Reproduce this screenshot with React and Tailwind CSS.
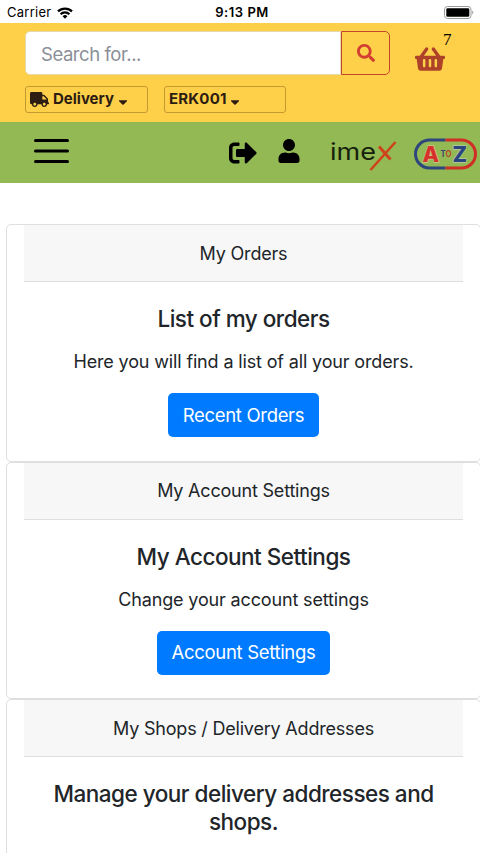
import { FaTruck, FaCaretDown, FaSearch, FaShoppingBasket, FaSignOutAlt, FaUser } from 'react-icons/fa';

const cards = [
    { header: 'My Orders', title: 'List of my orders', text: 'Here you will find a list of all your orders.', button: 'Recent Orders' },
    { header: 'My Account Settings', title: 'My Account Settings', text: 'Change your account settings', button: 'Account Settings' },
    { header: 'My Shops / Delivery Addresses', title: 'Manage your delivery addresses and shops.' },
];

function StatusBar() {
    return (
        <div className="h-[23px] shrink-0 bg-white grid grid-cols-3 items-center pl-[8px] pr-[6px] pt-[2px] text-[13px] text-black">
            <div className="flex items-center gap-[6px]">
                <span className="tracking-[0.25px] -ml-px">Carrier</span>
                <svg width="16" height="12" viewBox="0 0 16 12" fill="none" stroke="#000" strokeWidth="2.2">
                    <path d="M1 4.4a10 10 0 0 1 14 0" />
                    <path d="M3.6 7.2a6.2 6.2 0 0 1 8.8 0" />
                    <path d="M8 11.8 5.6 9.3a3.4 3.4 0 0 1 4.8 0Z" fill="#000" stroke="none" />
                </svg>
            </div>
            <span className="text-center font-semibold tracking-[0.55px] pl-[2px] whitespace-nowrap">9:13 PM</span>
            <svg className="justify-self-end mb-px" width="30" height="13" viewBox="0 0 30 13">
                <rect x="0.5" y="0.5" width="26.5" height="12" rx="3" fill="none" stroke="#9a9a9a" />
                <rect x="2.3" y="2.2" width="23" height="8.6" rx="1.4" fill="#000" />
                <path d="M28.3 4.6v3.8c1.4-.6 1.4-3.2 0-3.8Z" fill="#8c8c8c" />
            </svg>
        </div>
    );
}

function SearchHeader() {
    return (
        <div className="h-[99px] shrink-0 bg-[#fed049] pl-[25px] pt-2">
            <div className="flex">
                <div className="flex w-[365px] h-[44px]">
                    <input className="w-[316px] bg-white border border-[#e5d9ab] rounded-l-[5px] px-[15px] pt-[3px] text-[18.5px] tracking-[-0.45px] placeholder:text-[#8a8f98]" placeholder="Search for..." />
                    <button className="flex-1 border border-[#c4452e] rounded-r-[5px] flex items-center justify-center text-[#d23f31]">
                        <FaSearch size={18} />
                    </button>
                </div>
                <div className="relative ml-[25px] pt-[13px]">
                    <FaShoppingBasket size={30} className="text-[#ae4229]" />
                    <span className="absolute left-[28px] -top-px text-[17px] leading-5 text-black font-[Liberation_Serif,serif]">7</span>
                </div>
            </div>
            <div className="flex gap-4 mt-[11px] text-[15px] font-bold text-[#2c1c12]">
                <button className="w-[123px] h-[27px] border border-[#c49a30] rounded-[3px] flex items-center pl-1">
                    <FaTruck size={19} />
                    <span className="ml-1 tracking-normal">Delivery</span>
                    <FaCaretDown size={14} className="ml-[2px] mt-[5px]" />
                </button>
                <button className="w-[122px] h-[27px] border border-[#c49a30] rounded-[3px] flex items-center pl-1">
                    <span className="tracking-[0.2px]">ERK001</span>
                    <FaCaretDown size={14} className="ml-px mt-[5px]" />
                </button>
            </div>
        </div>
    );
}

function ImexLogo() {
    return (
        <svg className="ml-[29px] overflow-visible" width="68" height="34" viewBox="0 0 68 34">
            <text x="0" y="23.5" fontFamily="Inter" fontWeight="400" fontSize="23" fill="#16200c" textLength="46" lengthAdjust="spacingAndGlyphs">ime</text>
            <path d="M49 10.500 60.500 23.500" stroke="#d0421d" strokeWidth="3" />
            <path d="M65.500 6 40.500 34" stroke="#d0421d" strokeWidth="2.600" />
        </svg>
    );
}

function AtoZLogo() {
    return (
        <svg className="ml-[16px] mt-[3px] shrink-0" width="63" height="32" viewBox="0 0 63 32">
            <path d="M31.500 2H15.500a14 14 0 0 0 0 28H31.500" fill="none" stroke="#2f467c" strokeWidth="3" />
            <path d="M31.500 2H47.500a14 14 0 0 1 0 28H31.500" fill="none" stroke="#cf2f25" strokeWidth="3" />
            <text x="8.500" y="23.500" fontFamily="Inter" fontWeight="800" fontSize="21.500" fill="#d6322b" stroke="#d5c28c" strokeWidth="1.400" paintOrder="stroke">A</text>
            <text x="26.500" y="18.800" fontFamily="Inter" fontWeight="700" fontSize="8.500" fill="#3b4569" textLength="11" lengthAdjust="spacingAndGlyphs">T<tspan fill="#b94a2c">O</tspan></text>
            <text x="38.500" y="23.500" fontFamily="Inter" fontWeight="800" fontSize="21.500" fill="#29467f" stroke="#b9c7a0" strokeWidth="1.400" paintOrder="stroke">Z</text>
        </svg>
    );
}

function NavBar() {
    return (
        <div className="h-[61px] shrink-0 bg-[#92b954] flex items-center pl-[34px] text-black">
            <svg className="-mt-[3px]" width="35" height="26" viewBox="0 0 35 26" stroke="#000" strokeWidth="3" strokeLinecap="round">
                <path d="M1.500 2.500h32M1.500 13h32M1.500 23.500h32" />
            </svg>
            <FaSignOutAlt size={28} className="ml-[160px]" />
            <FaUser size={24} className="ml-[20px] -mt-[3px]" />
            <ImexLogo />
            <AtoZLogo />
        </div>
    );
}

function Card({ header, title, text, button }) {
    return (
        <div className="h-[237.6px] shrink-0 border border-[#dfdfdf] rounded-[5px] px-[17px] text-center text-[#212529]">
            <div className="h-[57px] bg-[#f7f7f7] border-b border-[#dfdfdf] flex items-center justify-center text-[18px] tracking-[-0.2px]">{header}</div>
            <div className="px-[23px] pt-[23px]">
                <h5 className="text-[22.5px] leading-[28px] font-medium tracking-[-0.5px]">{title}</h5>
                {text && <p className="mt-[15px] text-[18px] leading-[28px] tracking-[-0.15px]">{text}</p>}
                {button && <button className="mt-[17px] h-[44px] px-[15px] pt-px rounded-[5px] bg-[#007bff] text-white text-[18.5px] tracking-[-0.32px]">{button}</button>}
            </div>
        </div>
    );
}

export default function App() {
    return (
        <div className="w-[480px] h-[853px] overflow-hidden flex flex-col bg-white font-['Inter',sans-serif]">
            <StatusBar />
            <SearchHeader />
            <NavBar />
            <div className="mt-[41px] ml-[6px] w-[475px] flex flex-col">
                {cards.map((card) => <Card key={card.header} {...card} />)}
            </div>
        </div>
    );
}
